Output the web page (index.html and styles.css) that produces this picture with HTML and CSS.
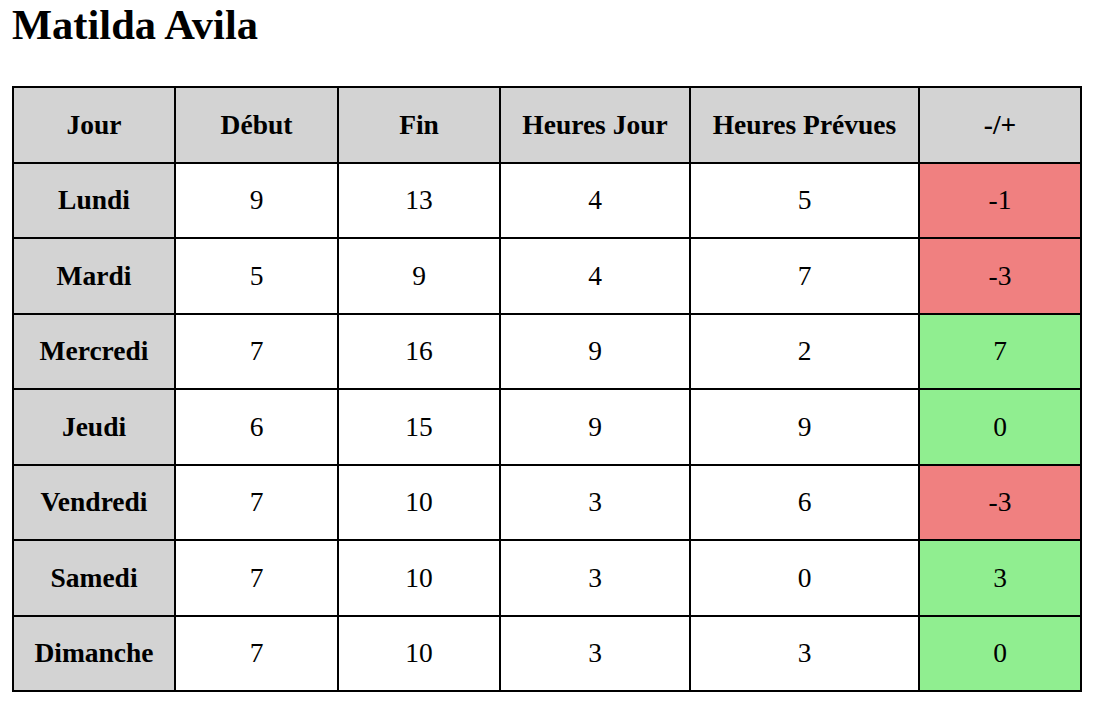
FILE: index.html
```html
<!DOCTYPE html>
<html lang="fr">
<head>
<meta charset="utf-8">
<title>Matilda Avila</title>
<link rel="stylesheet" href="styles.css">
</head>
<body>
<h1 class="title">Matilda Avila</h1>
<table class="schedule">
  <colgroup>
    <col class="c-day">
    <col class="c-start">
    <col class="c-end">
    <col class="c-hours">
    <col class="c-planned">
    <col class="c-diff">
  </colgroup>
  <thead>
    <tr>
      <th>Jour</th>
      <th>Début</th>
      <th>Fin</th>
      <th>Heures Jour</th>
      <th>Heures Prévues</th>
      <th>-/+</th>
    </tr>
  </thead>
  <tbody>
    <tr><th>Lundi</th><td>9</td><td>13</td><td>4</td><td>5</td><td class="neg">-1</td></tr>
    <tr><th>Mardi</th><td>5</td><td>9</td><td>4</td><td>7</td><td class="neg">-3</td></tr>
    <tr><th>Mercredi</th><td>7</td><td>16</td><td>9</td><td>2</td><td class="pos">7</td></tr>
    <tr><th>Jeudi</th><td>6</td><td>15</td><td>9</td><td>9</td><td class="pos">0</td></tr>
    <tr><th>Vendredi</th><td>7</td><td>10</td><td>3</td><td>6</td><td class="neg">-3</td></tr>
    <tr><th>Samedi</th><td>7</td><td>10</td><td>3</td><td>0</td><td class="pos">3</td></tr>
    <tr><th>Dimanche</th><td>7</td><td>10</td><td>3</td><td>3</td><td class="pos">0</td></tr>
  </tbody>
</table>
</body>
</html>
```
FILE: styles.css
```css
html, body {
  background: #ffffff;
}

body {
  margin: 0;
  padding: 2px 12px 0 12px;
  font-family: "Liberation Serif", "Times New Roman", serif;
  color: #000000;
}

.title {
  margin: 0 0 38px 0;
  font-size: 42.5px;
  line-height: 46px;
  font-weight: bold;
}

.schedule {
  border-collapse: collapse;
  table-layout: fixed;
  width: 1070px;
  font-size: 27.5px;
}

.c-day { width: 162px; }
.c-start { width: 163px; }
.c-end { width: 162px; }
.c-hours { width: 190px; }
.c-planned { width: 229px; }
.c-diff { width: 162px; }

.schedule th,
.schedule td {
  border: 2px solid #000000;
  padding: 0;
  height: 73.5px;
  text-align: center;
  vertical-align: middle;
  white-space: nowrap;
}

.schedule th {
  background: #d3d3d3;
  font-weight: bold;
}

.schedule td {
  background: #ffffff;
  font-weight: normal;
}

.schedule td.neg {
  background: #f08080;
}

.schedule td.pos {
  background: #90ee90;
}
```
